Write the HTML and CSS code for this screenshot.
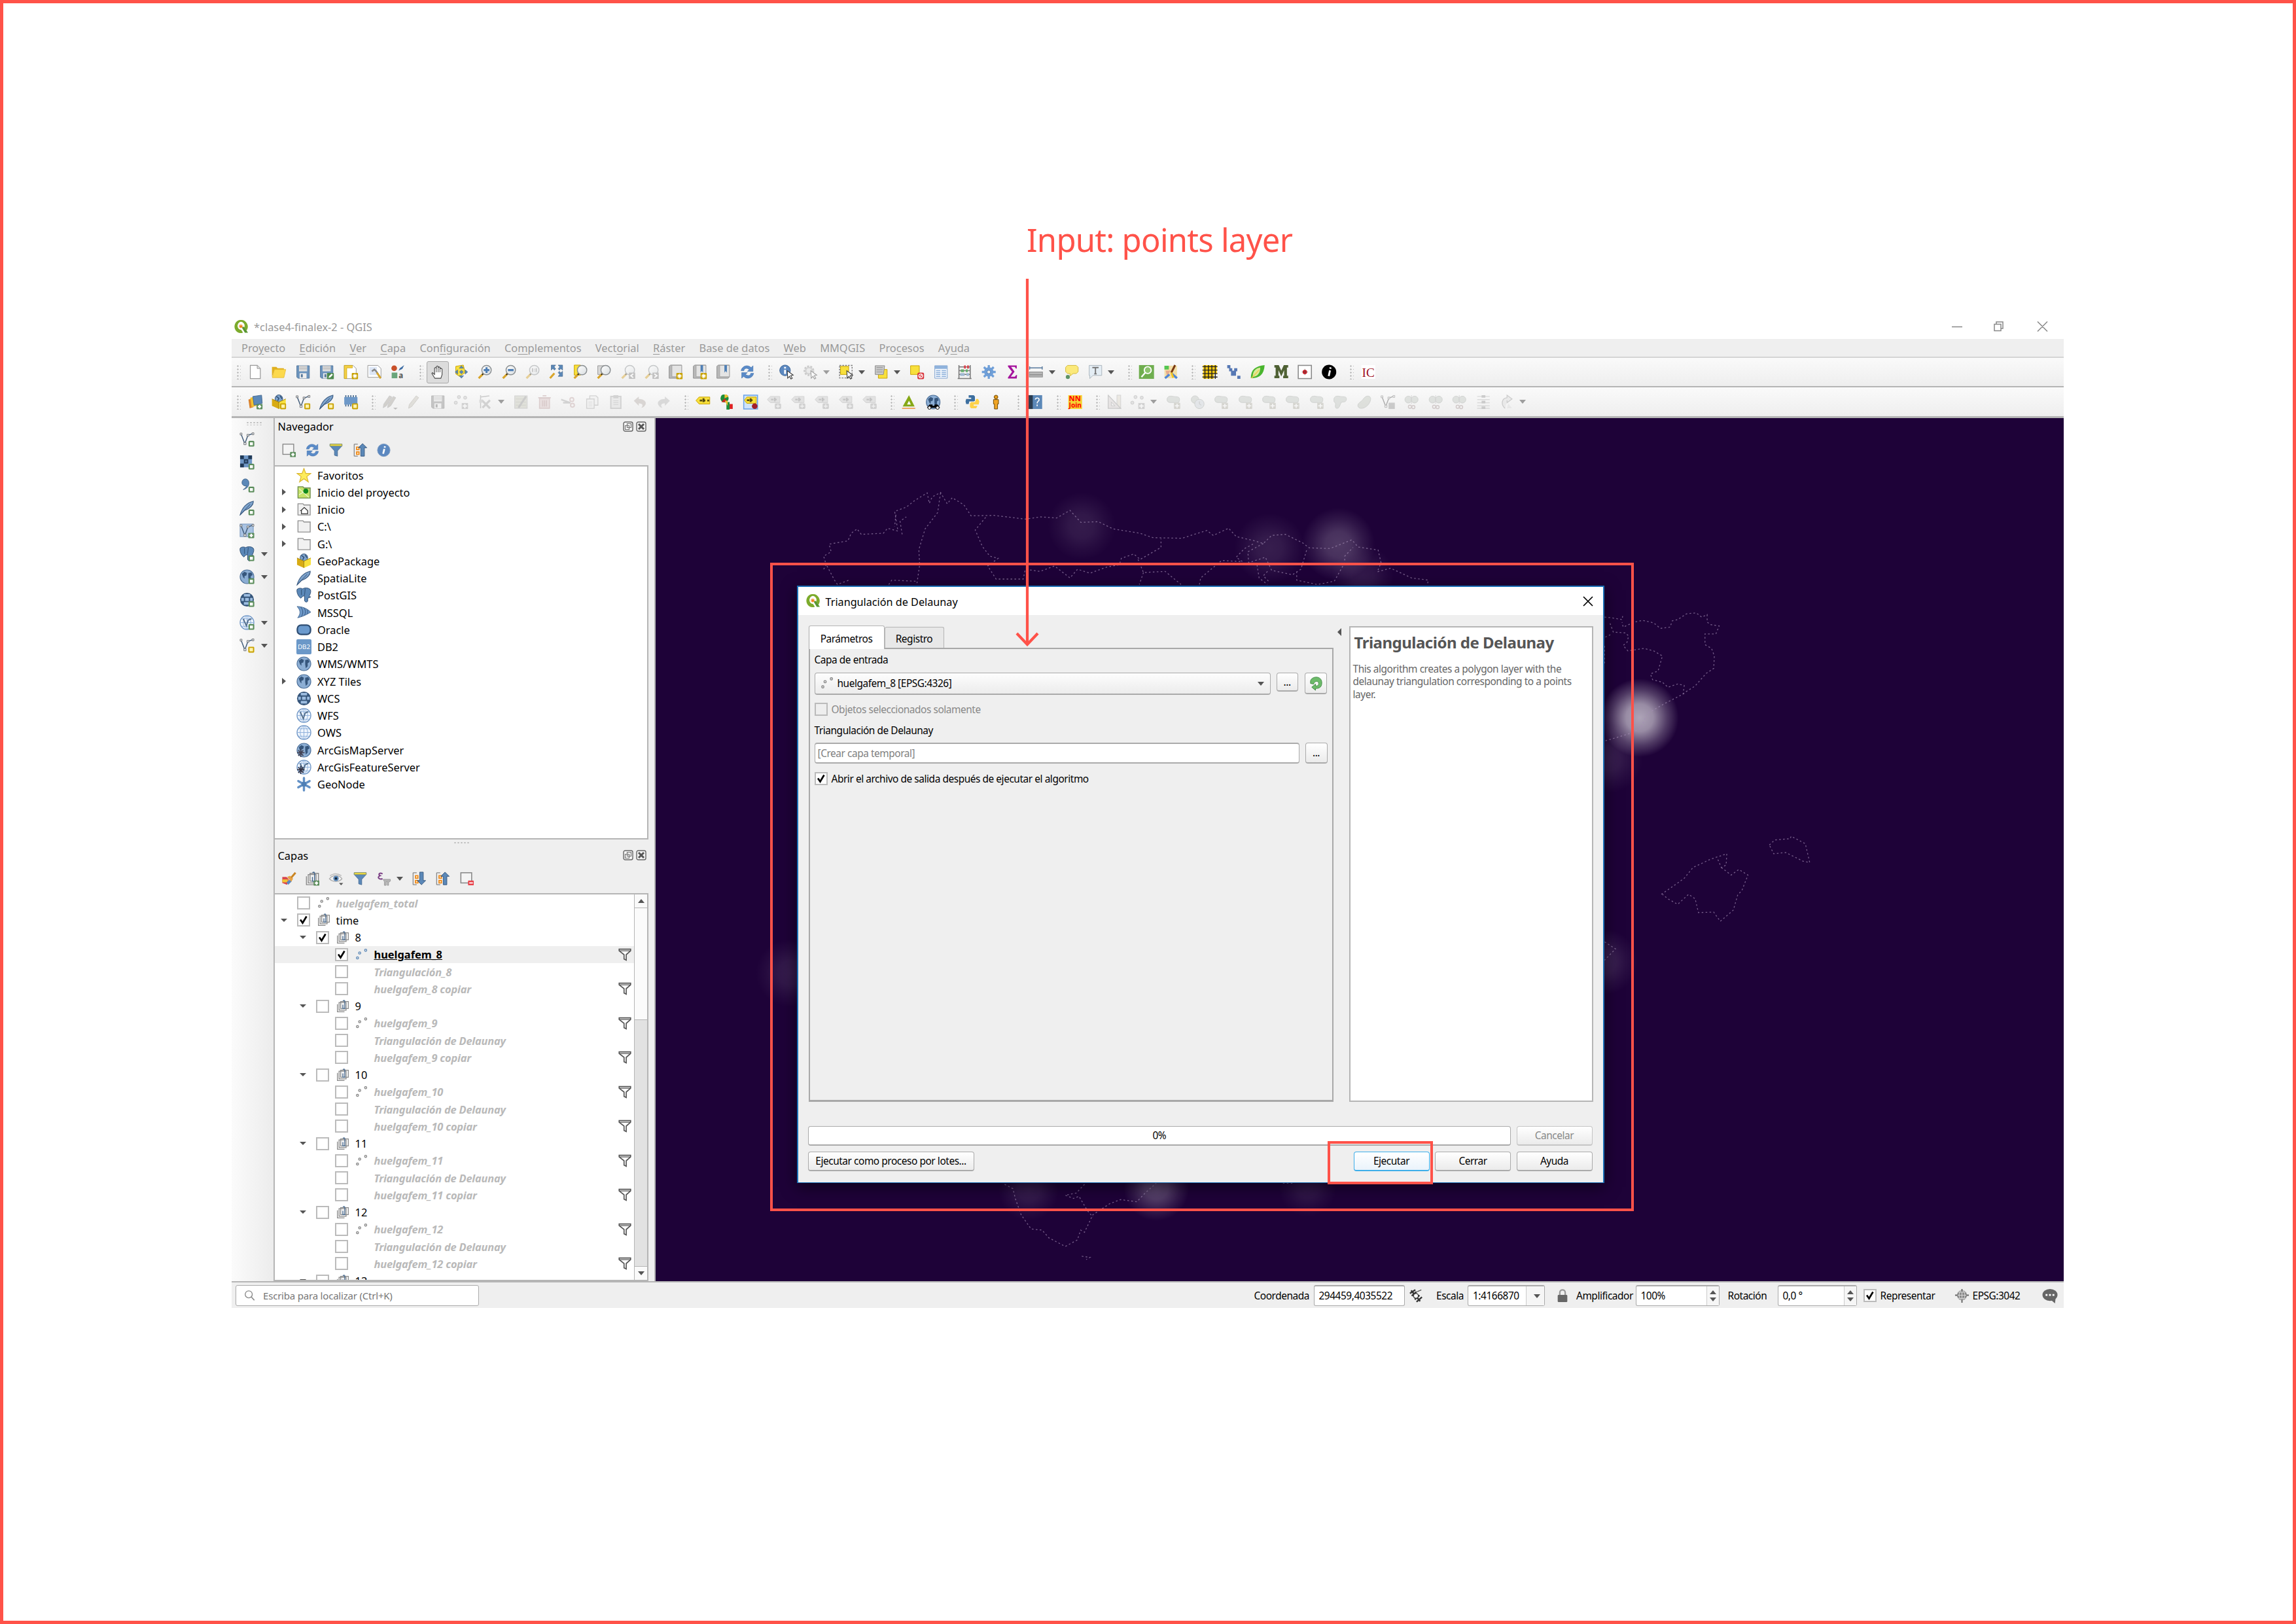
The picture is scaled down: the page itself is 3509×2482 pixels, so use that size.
FILE: index.html
```html
<!DOCTYPE html>
<html lang="es">
<head>
<meta charset="utf-8">
<title>QGIS</title>
<link rel="stylesheet" href="styles.css">
</head>
<body>
<svg class="defs" width="0" height="0">
<defs>
<linearGradient id="glass" x1="0" y1="0" x2="1" y2="1"><stop offset="0" stop-color="#fff"/><stop offset="1" stop-color="#d8dde0"/></linearGradient>
<radialGradient id="glow"><stop offset="0" stop-color="#fff"/><stop offset=".35" stop-color="#fff" stop-opacity=".85"/><stop offset=".7" stop-color="#fff" stop-opacity=".35"/><stop offset="1" stop-color="#fff" stop-opacity="0"/></radialGradient>
</defs>
<symbol id="logo" viewBox="0 0 24 24"><path d="M11 1a9.5 10.500 0 1 0 4 20l-3-4.200a5.600 6.400 0 1 1 4.800-3.200l4 4.500A10.500 11 0 0 0 11 1z" fill="#7cab2c"/><path d="M12.500 12h4l6.500 9.500h-5z" fill="#589632"/><circle cx="11.500" cy="11" r="3" fill="#f6b26b"/><circle cx="11.800" cy="11.500" r="1.700" fill="#ee7913"/></symbol>
<symbol id="b-plus" viewBox="0 0 24 24"><rect x="14" y="15" width="9.500" height="8.500" rx="1" fill="#5a8c5a"/><path d="M18.800 16.500v5.500M16 19.200h5.500" stroke="#fff" stroke-width="2.400"/></symbol>
<symbol id="b-new" viewBox="0 0 24 24"><rect x="13.500" y="13.500" width="10" height="10" rx="1" fill="#c8a100"/><path d="M18.500 14.800v7.400M14.800 18.500h7.400M16 16l5 5M21 16l-5 5" stroke="#fff" stroke-width="1.300"/></symbol>
<symbol id="b-sq" viewBox="0 0 24 24"><rect x="15" y="15" width="7.500" height="7.500" rx=".5" fill="#fff3b0" stroke="#c8a100" stroke-width="2"/></symbol>
<symbol id="b-gsq" viewBox="0 0 24 24"><rect x="15.500" y="15.500" width="7" height="7" rx=".5" fill="#fff" stroke="#5a8c5a" stroke-width="2.200"/></symbol>
<symbol id="new" viewBox="0 0 24 24"><path d="M4 1.500h11l5 5v16H4z" fill="#fff" stroke="#9a9a9a" stroke-width="1.300"/><path d="M15 1.500v5h5" fill="#ddd" stroke="#9a9a9a"/></symbol>
<symbol id="open" viewBox="0 0 24 24"><path d="M1 20V4h7l2 2h10v3H5z" fill="#e0b020"/><path d="M5 8h18l-3 13H1.500z" fill="#fcd94d" stroke="#e3b92e" stroke-width=".8"/></symbol>
<symbol id="save" viewBox="0 0 24 24"><path d="M2 2h20v20H4l-2-2z" fill="#6b93bd" stroke="#56789c"/><rect x="5.500" y="2" width="13" height="9" fill="#ddd"/><path d="M6 4h12M6 7h12" stroke="#aaa"/><rect x="6.500" y="14" width="11" height="8" fill="#eee"/><rect x="8.500" y="15.500" width="3" height="5" fill="#56789c"/></symbol>
<symbol id="saveas" viewBox="0 0 24 24"><use href="#save"/><rect x="12.500" y="13.500" width="11" height="10" rx="1" fill="#4e8a4e"/><path d="M15 21.500l1-3 4-4 2 2-4 4z" fill="#fff"/></symbol>
<symbol id="layout" viewBox="0 0 24 24"><path d="M1.500 1.500h14l5 5v16h-19z" fill="#fff" stroke="#999"/><path d="M1.500 1.500h13v4h-9v17h-4z" fill="#f3cf45" stroke="#c8a100" stroke-width=".7"/><use href="#b-new"/></symbol>
<symbol id="layoutm" viewBox="0 0 24 24"><path d="M1.500 1.500h16l5 5v14h-21z" fill="#fff" stroke="#999"/><path d="M4 4h12v13H4z" fill="#dde6f6"/><path d="M8 11l4-3 3 3 7 11" stroke="#888" stroke-width="2.600" fill="none"/><path d="M16 13l6 9" stroke="#d8a62c" stroke-width="3"/></symbol>
<symbol id="style" viewBox="0 0 24 24"><circle cx="6" cy="6" r="4.500" fill="#c8502a"/><path d="M13 10l2-4 7-5-3 6z" fill="#3f6ea5"/><rect x="2" y="13" width="9" height="9" fill="#6aa57a"/><text x="13" y="22" class="t-a">a</text></symbol>
<symbol id="hand" viewBox="0 0 24 24"><path d="M7 22l-5-8 1-1.500 3.500 3V5l1.500-1 1.500 1V2.500L11 1.500l1.500 1V4L14 3l1.500 1v2l1.500-.8 2 1.500V16l-2 6z" fill="#fff" stroke="#444" stroke-width="1.200"/><path d="M9.500 5v7M12.500 4v8M15.500 6v6" stroke="#444"/></symbol>
<symbol id="pan" viewBox="0 0 24 24"><path d="M3 3l12-2 3 12-9 6-6-4z" fill="#f8e03c" stroke="#c8a100"/><path d="M12 2l3.500 4h-7zM12 22l3.500-4h-7zM2 12l4-3.500v7zM22 12l-4-3.500v7zM9 12l3-3 3 3-3 3z" fill="#5b88b8" stroke="#3f638a" stroke-width=".6"/></symbol>
<symbol id="lens" viewBox="0 0 24 24"><path d="M9.500 14.500L2 22" stroke="#d9a52a" stroke-width="3.400"/><path d="M10 14l-2.500 2.500" stroke="#222" stroke-width="2"/><circle cx="14.500" cy="9" r="7.500" fill="url(#glass)" stroke="#8a8f92" stroke-width="1.500"/></symbol>
<symbol id="zin" viewBox="0 0 24 24"><use href="#lens"/><path d="M14.500 4.500v9M10 9h9" stroke="#4f7fb5" stroke-width="3.200"/></symbol>
<symbol id="zout" viewBox="0 0 24 24"><use href="#lens"/><path d="M10 9h9" stroke="#4f7fb5" stroke-width="3.200"/></symbol>
<symbol id="z11" viewBox="0 0 24 24"><use href="#lens"/><path d="M11.500 6v6M17.500 6v6M14.500 7v1M14.500 10v1" stroke="#777" stroke-width="1.500"/></symbol>
<symbol id="zfull" viewBox="0 0 24 24"><path d="M4 1h7L8.500 4 11 7 9 9 6.500 6.500 4 9zM22 1v8l-3-2.500L17 9l-2-2 2.500-3L15 1zM22 19h-7l2.500-3L15 13l2-2 2 2.500 3-2.500z" fill="#5b88b8" stroke="#3f638a" stroke-width=".7"/><path d="M9 14l-7 8" stroke="#d9a52a" stroke-width="3.200"/></symbol>
<symbol id="zsel" viewBox="0 0 24 24"><path d="M2 1h10v16H2z" fill="#f8e03c" stroke="#c8a100"/><use href="#lens"/></symbol>
<symbol id="zlay" viewBox="0 0 24 24"><path d="M2 2h10v14H2z" fill="#d8d8d8" stroke="#999"/><use href="#lens"/></symbol>
<symbol id="zlast" viewBox="0 0 24 24"><use href="#lens"/><rect x="13" y="13" width="10" height="10" fill="#888"/><path d="M20 15l-4 3 4 3" stroke="#fff" stroke-width="2" fill="none"/></symbol>
<symbol id="znext" viewBox="0 0 24 24"><use href="#lens"/><rect x="13" y="13" width="10" height="10" fill="#888"/><path d="M16 15l4 3-4 3" stroke="#fff" stroke-width="2" fill="none"/></symbol>
<symbol id="book" viewBox="0 0 24 24"><path d="M2 3l2-2h18v19l-2 2H2z" fill="#b8b8b8" stroke="#8f8f8f"/><path d="M6.500 1.500H22v18H6.500z" fill="#e4e4e4" stroke="#9c9c9c" stroke-width=".8"/></symbol>
<symbol id="bm1" viewBox="0 0 24 24"><use href="#book"/><use href="#b-new"/></symbol>
<symbol id="bm2" viewBox="0 0 24 24"><use href="#book"/><path d="M13.500 1h4v12l-2-2.500-2 2.500z" fill="#4f7fb5"/><use href="#b-new"/></symbol>
<symbol id="bm3" viewBox="0 0 24 24"><use href="#book"/><path d="M14 1h4v12l-2-2.500-2 2.500z" fill="#4f7fb5"/></symbol>
<symbol id="refresh" viewBox="0 0 24 24"><path d="M2 10C3 3 12-1 18 5l3-3v9h-9l3-3C11 5 7 6 6.500 10zM22 14c-1 7-10 11-16 5l-3 3v-9h9l-3 3c4 3 8 2 8.500-2z" fill="#5a8bc8" stroke="#3d6ca8" stroke-width=".6"/></symbol>
<symbol id="cursor" viewBox="0 0 24 24"><path d="M13 10l9.500 7-4 .8 2.500 4.200-2 1.200-2.500-4.200-2.800 3z" fill="#fff" stroke="#333" stroke-width="1.100"/></symbol>
<symbol id="ident" viewBox="0 0 24 24"><circle cx="9.500" cy="9.500" r="8.500" fill="#5b88c0" stroke="#3d6596"/><path d="M9.500 8.500V15M9.500 4v2.500" stroke="#fff" stroke-width="3"/><use href="#cursor"/></symbol>
<symbol id="action" viewBox="0 0 24 24"><circle cx="10" cy="10" r="7" fill="#ddd" stroke="#999" stroke-width="3" stroke-dasharray="3 2"/><circle cx="10" cy="10" r="5" fill="none" stroke="#aaa" stroke-width="2"/><use href="#cursor"/></symbol>
<symbol id="select" viewBox="0 0 24 24"><path d="M1.500 1.500h20v20h-20z" fill="none" stroke="#777" stroke-dasharray="2.500 2" stroke-width="1.500"/><path d="M3 3h13v13H3z" fill="#f8e03c" stroke="#c8a100"/><use href="#cursor"/></symbol>
<symbol id="selval" viewBox="0 0 24 24"><path d="M7 8h14v14H7z" fill="#f8e03c" stroke="#c8a100"/><path d="M2 2h15l-2 14H2z" fill="#ccc" stroke="#888"/><path d="M4 5h10M4 8.500h10M4 12h10" stroke="#8b8b8b"/></symbol>
<symbol id="desel" viewBox="0 0 24 24"><path d="M2 2h14v14H2z" fill="#f8e03c" stroke="#c8a100"/><rect x="13" y="13" width="10.500" height="10.500" rx="2" fill="#d9363e"/><circle cx="18.200" cy="18.200" r="3" fill="none" stroke="#fff" stroke-width="1.300"/><path d="M16 20.500l4.500-4.500" stroke="#fff" stroke-width="1.300"/></symbol>
<symbol id="table" viewBox="0 0 24 24"><path d="M2 2h20v20H2z" fill="#f2f6fc" stroke="#7fa3cf"/><path d="M2 2h20v5H2z" fill="#8fb2dc"/><path d="M4 10h7M13 10h7M4 13h7M13 13h7M4 16h7M13 16h7M4 19h7M13 19h7" stroke="#8db0da" stroke-width="1.600"/></symbol>
<symbol id="abacus" viewBox="0 0 24 24"><path d="M3 1v21M21 1v21M1 22.500h22M3 4h18M3 10h18M3 16h18" stroke="#777" stroke-width="1.600"/><path d="M11 4h3M16 4h3" stroke="#d9464e" stroke-width="5"/><path d="M6 10h5M14 10h3" stroke="#65ae6e" stroke-width="4.500"/><path d="M5 16h7M15 16h4" stroke="#9fb8d2" stroke-width="4.500"/></symbol>
<symbol id="gear" viewBox="0 0 24 24"><path d="M12 1v22M1 12h22M4.200 4.200l15.600 15.600M19.800 4.200L4.200 19.800" stroke="#6f9fd8" stroke-width="3.400"/><circle cx="12" cy="12" r="7.500" fill="#6f9fd8"/><circle cx="12" cy="12" r="2.800" fill="#eee" stroke="#4d7cb4"/></symbol>
<symbol id="sigma" viewBox="0 0 24 24"><path d="M5 1.500h14v5h-1.500L16 4H10l5.500 7.500L9.500 19.500H16l2-2.500h1.500l-.5 5.500H5V20.500l6.500-8.700L5 3.500z" fill="#a5139c"/></symbol>
<symbol id="measure" viewBox="0 0 24 24"><path d="M2 3v5M22 3v5M2 5.500h20" stroke="#56789c" stroke-width="1.500"/><rect x="1.500" y="12" width="21" height="8" fill="#b8b8b8" stroke="#888"/><path d="M2 16.500h20" stroke="#777"/></symbol>
<symbol id="tip" viewBox="0 0 24 24"><path d="M5 1.500h14l3 3v7l-3 3h-5l-5 4v-4H5l-3-3v-7z" fill="#fbe97a" stroke="#d2b93f"/><circle cx="5.500" cy="20" r="3.200" fill="#5e9364"/></symbol>
<symbol id="text" viewBox="0 0 24 24"><path d="M2 1.500h20v16H8l-5 5v-5H2z" fill="#e4edf4" stroke="#aab4bc"/><path d="M7 5h10M12 5v10M10 15h4" stroke="#777" stroke-width="2"/></symbol>
<symbol id="osm" viewBox="0 0 24 24"><rect y="1" width="24" height="22" fill="#6fae4f"/><circle cx="14" cy="9" r="5.500" fill="#8cc46e" stroke="#fff" stroke-width="2"/><path d="M10 13l-6 7" stroke="#fff" stroke-width="2.400"/></symbol>
<symbol id="crayon" viewBox="0 0 24 24"><rect x="2" y="2" width="20" height="20" fill="#f3dfa8"/><path d="M2 2h7v6H2z" fill="#53c653"/><path d="M4 10h8l-6 8z" fill="#e8a98a"/><path d="M14 15l8 7M3 22l7-6" stroke="#4f86d8" stroke-width="3.500"/><path d="M19 1L13 13" stroke="#7a3a12" stroke-width="3.200"/><path d="M13 13l3 8" stroke="#f2c422" stroke-width="3"/></symbol>
<symbol id="grid" viewBox="0 0 24 24"><path d="M1 1h22v14h-5v8H1z" fill="#f6c90e"/><path d="M4 1v22M9.500 1v22M15 1v22M20.500 1v22M0 3.500h24M0 9h24M0 14.500h24M0 20h24" stroke="#222" stroke-width="1.500"/></symbol>
<symbol id="yy" viewBox="0 0 24 24"><path d="M2 1h5v5H2zM5 6h5v5H5zM13 6h5v5h-5zM8 10h8v8H8zM18 18h5v5h-5z" fill="#5678b4"/></symbol>
<symbol id="leaf" viewBox="0 0 24 24"><path d="M1 22C1 8 8 3 23 1c-1 15-8 21-22 21z" fill="#49b52e"/><path d="M4 20C4 10 9 6 16 5c0 9-4 14-12 15z" fill="#d8ea9a"/><path d="M2 22L14 9" stroke="#f3c94a" stroke-width="1.500"/></symbol>
<symbol id="mm" viewBox="0 0 24 24"><path d="M1 1h7l4 9 4-9h7v4h-2v13h2v4h-8v-4h1.500V9L12 19 7.500 9v9H9v4H1v-4h2V5H1z" fill="#4f6134"/></symbol>
<symbol id="dot" viewBox="0 0 24 24"><rect x="1.500" y="1.500" width="21" height="21" fill="#fff" stroke="#888" stroke-width="1.600"/><circle cx="12" cy="12" r="3.500" fill="#d2151f"/><path d="M7 12h10M12 7v10" stroke="#555" stroke-width=".6"/></symbol>
<symbol id="info" viewBox="0 0 24 24"><ellipse cx="12" cy="12" rx="11.500" ry="11.500" fill="#000"/><path d="M13.500 9.500l-2 9M14.500 4.500l-.6 2.500" stroke="#fff" stroke-width="3"/></symbol>
<symbol id="ic" viewBox="0 0 24 24"><rect x="1" y="1" width="22" height="22" fill="#fff"/><text x="2" y="19.500" class="t-ic" textLength="20" lengthAdjust="spacingAndGlyphs">IC</text></symbol>
<symbol id="dsm" viewBox="0 0 24 24"><path d="M1 8l8-3v15l-6 2z" fill="#d9822b"/><path d="M4 5l10-2v15l-8 2z" fill="#f1c232"/><path d="M8 3l14-2 1 13-13 3z" fill="#5b88b8" stroke="#45688f"/><use href="#b-plus"/></symbol>
<symbol id="box" viewBox="0 0 24 24"><circle cx="12" cy="6.500" r="6" fill="#7ea3cc" stroke="#2f4e73"/><path d="M8 3l4 3-2 4M14 2l3 5" stroke="#2f4e73" stroke-width="1.500" fill="none"/><path d="M1 7l11 5v11L1 18z" fill="#d8ab14"/><path d="M23 7l-11 5v11l11-5z" fill="#f8e03c"/><path d="M1 7l11 5 11-5M12 12v11" stroke="#8a6d00" fill="none" stroke-width=".8"/></symbol>
<symbol id="gpkg" viewBox="0 0 24 24"><use href="#box"/><use href="#b-sq"/></symbol>
<symbol id="vee" viewBox="0 0 24 24"><path d="M2.500 3.500L8.500 19l5-13.500L22 2.500" fill="none" stroke="#3f5a78" stroke-width="1.500"/><path d="M1 2h3v3H1zM7 17h3.500v3.500H7zM12 4h3v3h-3zM20 1.500h3v3h-3z" fill="#dfe6ee" stroke="#777" stroke-width="1"/></symbol>
<symbol id="newv" viewBox="0 0 24 24"><use href="#vee"/><use href="#b-sq"/></symbol>
<symbol id="addv" viewBox="0 0 24 24"><use href="#vee"/><use href="#b-gsq"/></symbol>
<symbol id="quill" viewBox="0 0 24 24"><path d="M1 23C4 12 10 4 22 1c1 6-6 12-14 15z" fill="#7ea3cc" stroke="#3f5f85" stroke-width="1.200"/><path d="M1 23L17 6" stroke="#2f4e73"/></symbol>
<symbol id="newq" viewBox="0 0 24 24"><use href="#quill"/><use href="#b-sq"/></symbol>
<symbol id="addq" viewBox="0 0 24 24"><use href="#quill"/><use href="#b-gsq"/></symbol>
<symbol id="chip" viewBox="0 0 24 24"><path d="M4 1v18M8 1v18M12 1v18M16 1v18M20 1v18" stroke="#3f638a" stroke-width="1.700"/><rect x="1.500" y="4" width="21" height="12" fill="#6d98c8"/><use href="#b-sq"/></symbol>
<symbol id="pencil" viewBox="0 0 24 24"><path d="M4 22l1-6L16 2l4 3L9 19z" fill="#c9c6bc" stroke="#a5a29a"/></symbol>
<symbol id="pencils" viewBox="0 0 24 24"><path d="M1 21l1-6L11 2l4 2L6 18zM8 21l1-6L17 3l4 2-8 13z" fill="#aaa69e" stroke="#999"/><path d="M17 21h7l-3.500 3z" fill="#777"/></symbol>
<symbol id="pts" viewBox="0 0 24 24"><circle cx="8" cy="4" r="2.500" fill="#ccc" stroke="#999"/><circle cx="18" cy="5" r="2.500" fill="#ccc" stroke="#999"/><circle cx="3" cy="13" r="2.500" fill="#ccc" stroke="#999"/><rect x="12.500" y="13.500" width="10" height="9.500" fill="#aaa"/><path d="M17.500 15v7M14 18.200h7" stroke="#fff" stroke-width="2"/></symbol>
<symbol id="vertex" viewBox="0 0 24 24"><path d="M5 1v21M5 4l14-2" stroke="#999" stroke-width="1.500"/><path d="M7 9l13 13M20 9L8 21" stroke="#aaa" stroke-width="3.500"/><rect x="3" y="8" width="5" height="5" fill="#bbb"/></symbol>
<symbol id="modify" viewBox="0 0 24 24"><rect x="2" y="2" width="20" height="20" fill="#c9cabd" stroke="#aaa"/><path d="M4 7h16M4 12h16M4 17h16" stroke="#aeb0a0"/><path d="M8 21L20 3" stroke="#999" stroke-width="3"/></symbol>
<symbol id="trash" viewBox="0 0 24 24"><path d="M4 6h16v16H4z" fill="#dcc6c6" stroke="#bd9f9f" stroke-width="1.500"/><path d="M2 5h20M9 2h6M9 9v10M12 9v10M15 9v10" stroke="#bd9f9f" stroke-width="1.800"/></symbol>
<symbol id="cut" viewBox="0 0 24 24"><path d="M1 8l14 5M4 13h12" stroke="#aaa" stroke-width="2.500"/><circle cx="18" cy="8" r="3" fill="none" stroke="#c5aaaa" stroke-width="2"/><circle cx="19" cy="17" r="3" fill="none" stroke="#c5aaaa" stroke-width="2"/></symbol>
<symbol id="copy" viewBox="0 0 24 24"><path d="M8 2h10l3 3v12H8z" fill="#eee" stroke="#aaa" stroke-width="1.400"/><path d="M3 7h12v15H3z" fill="#eee" stroke="#aaa" stroke-width="1.400"/><path d="M6 12h6M6 15h6M6 18h6" stroke="#bbb"/></symbol>
<symbol id="paste" viewBox="0 0 24 24"><rect x="4" y="3" width="16" height="19" fill="#ddd" stroke="#aaa" stroke-width="2"/><rect x="8" y="1" width="8" height="5" fill="#aaa"/><path d="M8 10h8M8 13h8M8 16h8" stroke="#aaa"/></symbol>
<symbol id="undo" viewBox="0 0 24 24"><path d="M2 10l8-7v4c9 0 12 5 11 8s-4 6-7 6c3-3 3-7-4-7v4z" fill="#b9b1ad"/></symbol>
<symbol id="redo" viewBox="0 0 24 24"><path d="M22 10l-8-7v4c-9 0-12 5-11 8s4 6 7 6c-3-3-3-7 4-7v4z" fill="#b9b9b9"/></symbol>
<symbol id="label" viewBox="0 0 24 24"><path d="M6 4h17v11H6l-5-5.500z" fill="#f8e03c" stroke="#c8a100"/><path d="M7 9.500h4M13 6v6M13 9.500h3M19 9.500h3" stroke="#554b10" stroke-width="3"/></symbol>
<symbol id="diag" viewBox="0 0 24 24"><circle cx="8" cy="6" r="6.500" fill="#1d8e3a"/><path d="M8 6V-.5a6.500 6.500 0 0 1 6 4z" fill="#f1c232"/><path d="M8 6l5 6H3z" fill="#c22"/><path d="M11 12h5v12h-5z" fill="#1d8e3a"/><path d="M16 15h5v8h-5z" fill="#d22"/><path d="M8 10h5v8z" fill="#f1c232"/></symbol>
<symbol id="labsel" viewBox="0 0 24 24"><rect x="1" y="1" width="22" height="22" fill="#cfe3fa" stroke="#6aa3e8" stroke-width="1.600"/><path d="M6 4h15v10H6L2 9z" fill="#f8e03c" stroke="#c8a100"/><path d="M6 9h4M12 6v6M12 9h3" stroke="#554b10" stroke-width="3"/><circle cx="18.500" cy="18.500" r="4.500" fill="#a11d2a"/></symbol>
<symbol id="labx" viewBox="0 0 24 24"><path d="M6 3h15v10H6L1 8z" fill="#ccc" stroke="#aaa"/><path d="M7 8h4M13 5v6M13 8h3" stroke="#888" stroke-width="2.500"/><rect x="13" y="14" width="10" height="9" rx="2" fill="#aaa"/><path d="M18 15.500v6M15 18.500h6" stroke="#eee" stroke-width="1.500"/></symbol>
<symbol id="tri" viewBox="0 0 24 24"><path d="M12 1l9 18H2z" fill="#86a816"/><path d="M12 10l3 6H9z" fill="#fff"/><path d="M1 22h21" stroke="#ee9d55" stroke-width="2"/></symbol>
<symbol id="globe" viewBox="0 0 24 24"><circle cx="12" cy="12" r="11" fill="#8caed4" stroke="#4d7099" stroke-width="1.200"/><path d="M4 7l4-3 4 2-1 4-3 1v4l-2-2-2-5zM14 6l5-1 2 4-3 2v5l-3 3-1-6z" fill="#36567c"/></symbol>
<symbol id="bino" viewBox="0 0 24 24"><use href="#globe"/><path d="M6 16h5v2h3v-2h5l4 5H2z" fill="#000"/><circle cx="6" cy="21" r="2.500" fill="#fff" stroke="#000"/><circle cx="19" cy="21" r="2.500" fill="#fff" stroke="#000"/></symbol>
<symbol id="py" viewBox="0 0 24 24"><path d="M6 1h8l2 2v7l-2 1H7l-1 4H2l-1-4 1-4h8V5H6z" fill="#3d6f9f"/><path d="M18 22h-8l-2-2v-6l2-2h6l2-5h3l2 4-1 5h-8v2h6z" fill="#fdd24a"/></symbol>
<symbol id="person" viewBox="0 0 24 24"><circle cx="12" cy="4" r="3" fill="#e39a1c" stroke="#6b4604"/><path d="M8 8h8v7h-1.500v8h-5v-8H8z" fill="#f0a526" stroke="#6b4604"/></symbol>
<symbol id="help" viewBox="0 0 24 24"><rect x="1" y="1" width="22" height="22" fill="#5b88b8"/><rect x="1" y="1" width="7" height="22" fill="#2a3c50"/><path d="M12 8c1-4 7-3 6 1-1 2-3 2-3 5M15 16v2.500" fill="none" stroke="#fff" stroke-width="1.700"/></symbol>
<symbol id="nn" viewBox="0 0 24 24"><rect x="1" y="1" width="22" height="22" fill="#f5d232"/><text x="2" y="10.500" class="t-nn" textLength="19" lengthAdjust="spacingAndGlyphs">NN</text><text x="2" y="20.500" class="t-nn" textLength="20" lengthAdjust="spacingAndGlyphs">Join</text></symbol>
<symbol id="ruler" viewBox="0 0 24 24"><rect x="16" y="1" width="6" height="21" fill="#ded9cc" stroke="#aaa"/><path d="M2 1v21h20z" fill="#d9d2d2" stroke="#999" stroke-width="1.300"/><path d="M7 12v6h6z" fill="#eee" stroke="#999"/></symbol>
<symbol id="blob" viewBox="0 0 24 24"><path d="M2 8c0-6 6-6 10-5s10-1 10 5-5 6-8 5-12 2-12-5z" fill="#c4c9c4" stroke="#a3a8a3"/><rect x="13" y="13" width="10" height="10" rx="1" fill="#b5b3a8"/><path d="M18 14.500v7M14.500 18h7" stroke="#fff" stroke-width="1.600"/></symbol>
<symbol id="blob2" viewBox="0 0 24 24"><circle cx="8" cy="8" r="6" fill="#c4c9c4" stroke="#a3a8a3"/><ellipse cx="15" cy="15" rx="7.500" ry="7.500" fill="#d0d6dc" stroke="#a3a8a3"/><path d="M15 11v4l3 2" stroke="#999" fill="none"/></symbol>
<symbol id="blob3" viewBox="0 0 24 24"><path d="M2 8c0-6 6-6 10-5s10-1 10 4-4 5-7 5-3 10-8 10-1-8-3-9-2-2-2-5z" fill="#c4c9c4" stroke="#a3a8a3"/></symbol>
<symbol id="blob4" viewBox="0 0 24 24"><path d="M11 6c5-6 12-4 11 2-1 7-8 14-15 14-6 0-7-6-3-9s5-4 7-7z" fill="#c4c9c0" stroke="#a3a8a3"/></symbol>
<symbol id="split" viewBox="0 0 24 24"><circle cx="7" cy="8" r="5.500" fill="#c4c9c4" stroke="#a3a8a3"/><circle cx="17" cy="8" r="5.500" fill="#c4c9c4" stroke="#a3a8a3"/><path d="M12 1v14" stroke="#aaa"/><circle cx="9.500" cy="19.500" r="2.500" fill="none" stroke="#a99" stroke-width="1.500"/><circle cx="15" cy="20" r="2.500" fill="none" stroke="#a99" stroke-width="1.500"/></symbol>
<symbol id="vdis" viewBox="0 0 24 24"><use href="#vee"/><rect x="13" y="13" width="10" height="10" fill="#999"/></symbol>
<symbol id="lines" viewBox="0 0 24 24"><path d="M2 3h20M2 8h20M2 13h20M2 18h20M2 22h20" stroke="#bbb" stroke-width="1.500"/><path d="M9 3h6M9 12h6M9 21h6" stroke="#999" stroke-width="4"/></symbol>
<symbol id="rot" viewBox="0 0 24 24"><path d="M9 22C2 16 3 6 12 5V1l8 6-8 6V9" fill="#ddd" stroke="#999" stroke-width="1.300"/><path d="M14 14l6 8h-8z" fill="#ddd"/></symbol>
<symbol id="raster" viewBox="0 0 24 24"><rect x="1" y="1" width="19" height="19" fill="#6f97c6"/><path d="M1 1h6v6H1zM14 1h6v6h-6zM7 7h7v7H7zM1 14h6v6H1z" fill="#1f3956"/><path d="M9 9h3v3H9z" fill="#4e75a0"/><use href="#b-gsq"/></symbol>
<symbol id="comma" viewBox="0 0 24 24"><path d="M9 2c4 0 6 3 6 7 0 5-4 9-9 10 3-2 5-4 5-6-4 1-7-2-7-5s2-6 5-6z" fill="#5b88b8" stroke="#3f638a"/><use href="#b-gsq"/></symbol>
<symbol id="virt" viewBox="0 0 24 24"><rect x="1" y="1" width="21" height="20" fill="#a9c3e2" stroke="#6d90ba"/><use href="#vee"/><use href="#b-plus"/></symbol>
<symbol id="eleph" viewBox="0 0 24 24"><path d="M1 3c3-3 7-2 9-1 3-2 9-2 12 1 2 3 0 8-2 11l3 1-5 2v5c-2 2-4 1-5-1V13l-3 1-3 3C3 14 0 8 1 3z" fill="#5b88b8" stroke="#2f4e73"/><path d="M8 3v9M14 2l-1 10" stroke="#2f4e73"/></symbol>
<symbol id="addel" viewBox="0 0 24 24"><use href="#eleph"/><use href="#b-gsq"/></symbol>
<symbol id="addgl" viewBox="0 0 24 24"><use href="#globe"/><use href="#b-gsq"/></symbol>
<symbol id="wcs" viewBox="0 0 24 24"><circle cx="12" cy="12" r="11" fill="#35557a"/><path d="M7 3h10v4H7zM3 9h4v5H3zM9 9h6v5H9zM17 9h4v5h-4zM7 16h10v4H7z" fill="#9dbde0"/></symbol>
<symbol id="addwcs" viewBox="0 0 24 24"><use href="#wcs"/><use href="#b-gsq"/></symbol>
<symbol id="ows" viewBox="0 0 24 24"><circle cx="12" cy="12" r="11" fill="#eef5fd" stroke="#6d94c4" stroke-width="1.300"/><path d="M1 12h22M3 6h18M3 18h18M12 1v22M12 1C4 7 4 17 12 23M12 1c8 6 8 16 0 22" fill="none" stroke="#8db0da"/></symbol>
<symbol id="wfs" viewBox="0 0 24 24"><use href="#ows"/><path d="M6 6l5 11 3-9 5-2" fill="none" stroke="#55708e" stroke-width="2"/></symbol>
<symbol id="addwfs" viewBox="0 0 24 24"><use href="#wfs"/><use href="#b-gsq"/></symbol>
<symbol id="addbox" viewBox="0 0 24 24"><rect x="2" y="2" width="18" height="17" fill="#f4f4f4" stroke="#888" stroke-width="1.500"/><use href="#b-plus"/></symbol>
<symbol id="funnel" viewBox="0 0 24 24"><path d="M2 2h20v3l-7.500 8v9l-5-1.500V13L2 5z" fill="#5b88b8" stroke="#456b95"/><path d="M2 2h20v3H2z" fill="#f8e03c" stroke="#8f9a60"/></symbol>
<symbol id="collapse" viewBox="0 0 24 24"><path d="M2 2v20M2 2h6M2 22h6" stroke="#888" stroke-width="1.400" fill="none"/><path d="M6 7h4v4H6zM6 15h4v4H6z" fill="#fff" stroke="#f08c1a" stroke-width="2"/><path d="M16 1l7 7h-4v14h-6V8H9z" fill="#5b88b8" stroke="#33557d"/></symbol>
<symbol id="expand" viewBox="0 0 24 24"><path d="M2 2v20M2 2h6M2 22h6" stroke="#888" stroke-width="1.400" fill="none"/><path d="M6 7h4v4H6zM6 15h4v4H6z" fill="#fff" stroke="#f08c1a" stroke-width="2"/><path d="M16 22l7-7h-4V1h-6v14H9z" fill="#5b88b8" stroke="#33557d"/></symbol>
<symbol id="iblue" viewBox="0 0 24 24"><circle cx="12" cy="12" r="10.500" fill="#5b88c0" stroke="#7f9dc2"/><path d="M13 10l-2 8M14 5.500l-.5 2.500" stroke="#fff" stroke-width="3"/></symbol>
<symbol id="star" viewBox="0 0 24 24"><path d="M12 1l3 8h8l-6.500 5 2.500 8.500L12 17.500 5 22.500 7.500 14 1 9h8z" fill="#fdec5c" stroke="#d9b52c" stroke-width="1.200"/></symbol>
<symbol id="folder" viewBox="0 0 24 24"><path d="M2.500 21V3h8l1.500 2h10v16z" fill="#f1f1f1" stroke="#909090" stroke-width="1.400"/></symbol>
<symbol id="fproj" viewBox="0 0 24 24"><path d="M2.500 21V3h8l1.500 2h10v16z" fill="#c6e26a" stroke="#6c8a4a" stroke-width="1.400"/><path d="M4 6l16 14M4 16l8-5" stroke="#fff"/><circle cx="15" cy="10" r="4" fill="#0f8a1d"/></symbol>
<symbol id="fhome" viewBox="0 0 24 24"><use href="#folder"/><path d="M7 14l5.500-5 5.500 5v5H8v-5z" fill="#fff" stroke="#333" stroke-width="1.300"/></symbol>
<symbol id="mssql" viewBox="0 0 24 24"><path d="M1 2c8 0 16 3 22 9-5 3-12 7-21 9 5-6 5-12-1-18z" fill="#6d98c8" stroke="#456b95"/><path d="M7 3c4 5 4 10 1 15M12 4c3 4 3 8 1 12M17 7c2 3 1 5 0 7" stroke="#33557d" fill="none"/></symbol>
<symbol id="oracle" viewBox="0 0 24 24"><rect x="1.500" y="4.500" width="21" height="15" rx="6" fill="#6b9acd" stroke="#2f4e73" stroke-width="2.400"/></symbol>
<symbol id="db2" viewBox="0 0 24 24"><rect x="0" y="0" width="24" height="24" rx="2" fill="#6b98c8"/><text x="2" y="15.500" class="t-db" textLength="20" lengthAdjust="spacingAndGlyphs">DB2</text></symbol>
<symbol id="arcm" viewBox="0 0 24 24"><use href="#globe"/><path d="M7 10v13M1 16h12M3 12l8 9M11 12l-8 9" stroke="#445" stroke-width="1.700"/></symbol>
<symbol id="arcf" viewBox="0 0 24 24"><use href="#wfs"/><path d="M7 10v13M1 16h12M3 12l8 9M11 12l-8 9" stroke="#334" stroke-width="1.700"/></symbol>
<symbol id="geonode" viewBox="0 0 24 24"><path d="M12 2v20M3 7l18 10M21 7L3 17" stroke="#6391c6" stroke-width="3.600" stroke-linecap="round"/><circle cx="12" cy="12" r="4" fill="#4f7fb5"/></symbol>
<symbol id="brush" viewBox="0 0 24 24"><path d="M1 9h7l4 4-3 9-8-3z" fill="#d9464e"/><path d="M1 13l10 0-2 5-8 0z" fill="#f1c232"/><path d="M8 18l6-5 3 3-6 6z" fill="#5b88c0"/><path d="M9 9l5-2 5 5-3 5z" fill="#e7a244"/><path d="M16 10l7-8" stroke="#c98422" stroke-width="3.200"/></symbol>
<symbol id="group" viewBox="0 0 24 24"><path d="M2 8v14h13" fill="none" stroke="#888" stroke-width="1.500"/><path d="M5 5h13v14H5z" fill="#f4f4f4" stroke="#888" stroke-width="1.500"/><path d="M8 3h14v13H8z" fill="none" stroke="#888" stroke-width="1.500"/><path d="M12 9v7h3.500V2.500c0-2-3-2-3 0" fill="none" stroke="#45688f" stroke-width="1.600"/></symbol>
<symbol id="addgrp" viewBox="0 0 24 24"><use href="#group"/><use href="#b-plus"/></symbol>
<symbol id="eye" viewBox="0 0 24 24"><path d="M1 12C6 5 17 5 22 12 17 18 6 18 1 12z" fill="#f2f2f2" stroke="#aaa" stroke-width="1.400"/><circle cx="12" cy="11.500" r="4.500" fill="#5b88b8"/><circle cx="12" cy="11.500" r="2" fill="#123"/><path d="M2 7c6-4 13-4 19 0" stroke="#bbb" fill="none" stroke-width="1.500"/><path d="M17 19h7l-3.500 4z" fill="#555"/></symbol>
<symbol id="eps" viewBox="0 0 24 24"><path d="M10 4C5 1 2 5 6 7 0 9 4 14 10 12" fill="none" stroke="#7b3f85" stroke-width="2.200"/><path d="M11 13h12v3l-3 2v5h-2v-6h-2v6h-3v-6z" fill="#b5b5b5" stroke="#999"/></symbol>
<symbol id="rem" viewBox="0 0 24 24"><rect x="2" y="2" width="18" height="17" fill="#f4f4f4" stroke="#888" stroke-width="1.700"/><rect x="14" y="15" width="9.500" height="8" rx="1" fill="#e8434b"/><path d="M16 19h6" stroke="#fff" stroke-width="2"/></symbol>
<symbol id="points" viewBox="0 0 24 24"><g fill="#e8e8e8" stroke="currentColor" stroke-width="1.500"><circle cx="19" cy="4" r="2"/><circle cx="8" cy="9" r="2"/><circle cx="4" cy="18" r="2"/></g></symbol>
<symbol id="filt" viewBox="0 0 24 24"><path d="M1.500 2h21v3l-8 7v10l-4-2V12l-9-7z" fill="#fff" stroke="currentColor" stroke-width="2"/><path d="M2 5h20" stroke="currentColor" stroke-width="1.500"/></symbol>
<symbol id="check" viewBox="0 0 20 20"><path d="M5 9.500l3.500 5L14.500 4.500" fill="none" stroke="#000" stroke-width="2.700"/></symbol>
<symbol id="float" viewBox="0 0 16 16"><rect x="1" y="1" width="14" height="14" rx="2.500" fill="#f4f4f4" stroke="#666" stroke-width="1.400"/><path d="M6.500 3.500h6v6h-6z M3.500 6.500h6v6h-6z" fill="#f4f4f4" stroke="#777" stroke-width="1.200"/></symbol>
<symbol id="x" viewBox="0 0 16 16"><rect x="1" y="1" width="14" height="14" rx="2.500" fill="#f4f4f4" stroke="#666" stroke-width="1.400"/><path d="M4 4l8 8M12 4l-8 8" stroke="#555" stroke-width="3"/></symbol>
<symbol id="loop" viewBox="0 0 24 24"><path d="M3 12V8c2-8 18-9 18 3 0 9-7 9-10 9v3l-6-5 6-5v3c4 0 5-1 5-4 0-5-7-4-8 1z" fill="#6dbb6a" stroke="#3f8a42"/></symbol>
</svg>

<main class="page">
<section class="window">
  <header class="titlebar">
    <svg class="i23"><use href="#logo"/></svg><span class="caption">*clase4-finalex-2 - QGIS</span>
    <svg class="controls" viewBox="0 0 150 20"><path d="M1 10.500h16M66 6.500h10v10h-10zM69 6v-3h10v10h-3M132 2.500l15 15M147 2.500l-15 15" fill="none" stroke="#888" stroke-width="1.500"/></svg>
  </header>
  <nav class="menubar"><span>Pro<u>y</u>ecto</span><span><u>E</u>dición</span><span><u>V</u>er</span><span><u>C</u>apa</span><span>Con<u>f</u>iguración</span><span>Co<u>m</u>plementos</span><span>Vect<u>o</u>rial</span><span><u>R</u>áster</span><span>Base de <u>d</u>atos</span><span><u>W</u>eb</span><span>MMQGIS</span><span>Pro<u>c</u>esos</span><span>Ay<u>u</u>da</span></nav>
  <div class="toolbar">
    <i class="grip first"></i><svg><use href="#new"/></svg><svg><use href="#open"/></svg><svg><use href="#save"/></svg><svg><use href="#saveas"/></svg><svg><use href="#layout"/></svg><svg><use href="#layoutm"/></svg><svg><use href="#style"/></svg>
    <i class="grip"></i><svg class="pressed"><use href="#hand"/></svg><svg><use href="#pan"/></svg><svg><use href="#zin"/></svg><svg><use href="#zout"/></svg><svg class="dis"><use href="#z11"/></svg><svg><use href="#zfull"/></svg><svg><use href="#zsel"/></svg><svg><use href="#zlay"/></svg><svg class="dis"><use href="#zlast"/></svg><svg class="dis"><use href="#znext"/></svg><svg><use href="#bm1"/></svg><svg><use href="#bm2"/></svg><svg><use href="#bm3"/></svg><svg><use href="#refresh"/></svg>
    <i class="grip"></i><svg><use href="#ident"/></svg><svg class="dis"><use href="#action"/></svg><b class="arr dis2"></b><svg><use href="#select"/></svg><b class="arr"></b><svg><use href="#selval"/></svg><b class="arr"></b><svg><use href="#desel"/></svg><svg><use href="#table"/></svg><svg><use href="#abacus"/></svg><svg><use href="#gear"/></svg><svg><use href="#sigma"/></svg><svg><use href="#measure"/></svg><b class="arr"></b><svg><use href="#tip"/></svg><svg><use href="#text"/></svg><b class="arr"></b>
    <i class="grip"></i><svg><use href="#osm"/></svg><svg><use href="#crayon"/></svg>
    <i class="grip"></i><svg><use href="#grid"/></svg><svg><use href="#yy"/></svg><svg><use href="#leaf"/></svg><svg><use href="#mm"/></svg><svg><use href="#dot"/></svg><svg><use href="#info"/></svg>
    <i class="grip"></i><svg><use href="#ic"/></svg>
  </div>
  <div class="toolbar second">
    <i class="grip first"></i><svg><use href="#dsm"/></svg><svg><use href="#gpkg"/></svg><svg><use href="#newv"/></svg><svg><use href="#newq"/></svg><svg><use href="#chip"/></svg>
    <i class="grip"></i><svg class="dis"><use href="#pencils"/></svg><svg class="dis"><use href="#pencil"/></svg><svg class="dis gray"><use href="#save"/></svg><svg class="dis"><use href="#pts"/></svg><svg class="dis"><use href="#vertex"/></svg><b class="arr dis2"></b><svg class="dis"><use href="#modify"/></svg><svg class="dis"><use href="#trash"/></svg><svg class="dis"><use href="#cut"/></svg><svg class="dis"><use href="#copy"/></svg><svg class="dis"><use href="#paste"/></svg><svg class="dis"><use href="#undo"/></svg><svg class="dis"><use href="#redo"/></svg>
    <i class="grip"></i><svg><use href="#label"/></svg><svg><use href="#diag"/></svg><svg><use href="#labsel"/></svg><svg class="dis"><use href="#labx"/></svg><svg class="dis"><use href="#labx"/></svg><svg class="dis"><use href="#labx"/></svg><svg class="dis"><use href="#labx"/></svg><svg class="dis"><use href="#labx"/></svg>
    <i class="grip"></i><svg><use href="#tri"/></svg><svg><use href="#bino"/></svg>
    <i class="grip"></i><svg><use href="#py"/></svg><svg><use href="#person"/></svg>
    <i class="grip"></i><svg><use href="#help"/></svg>
    <i class="grip"></i><svg><use href="#nn"/></svg>
    <i class="grip"></i><svg class="dis"><use href="#ruler"/></svg><svg class="dis"><use href="#pts"/></svg><b class="arr dis2"></b><svg class="dis"><use href="#blob"/></svg><svg class="dis"><use href="#blob2"/></svg><svg class="dis"><use href="#blob"/></svg><svg class="dis"><use href="#blob"/></svg><svg class="dis"><use href="#blob"/></svg><svg class="dis"><use href="#blob"/></svg><svg class="dis"><use href="#blob"/></svg><svg class="dis"><use href="#blob3"/></svg><svg class="dis"><use href="#blob4"/></svg><svg class="dis gray"><use href="#vdis"/></svg><svg class="dis"><use href="#split"/></svg><svg class="dis"><use href="#split"/></svg><svg class="dis"><use href="#split"/></svg><svg class="dis"><use href="#lines"/></svg><svg class="dis"><use href="#rot"/></svg><b class="arr dis2"></b>
  </div>

  <div class="workspace">
    <aside class="side">
      <i class="hgrip"></i>
      <div><svg><use href="#addv"/></svg></div><div><svg><use href="#raster"/></svg></div><div><svg><use href="#comma"/></svg></div><div><svg><use href="#addq"/></svg></div><div><svg><use href="#virt"/></svg></div><div><svg><use href="#addel"/></svg><b class="arr"></b></div><div><svg><use href="#addgl"/></svg><b class="arr"></b></div><div><svg><use href="#addwcs"/></svg></div><div><svg><use href="#addwfs"/></svg><b class="arr"></b></div><div><svg><use href="#newv"/></svg><b class="arr"></b></div>
    </aside>
    <section class="docks">
      <h2 class="dock-title">Navegador<span><svg><use href="#float"/></svg><svg><use href="#x"/></svg></span></h2>
      <div class="dock-tools"><svg><use href="#addbox"/></svg><svg><use href="#refresh"/></svg><svg><use href="#funnel"/></svg><svg><use href="#collapse"/></svg><svg><use href="#iblue"/></svg></div>
      <ul class="tree browser">
        <li><i></i><svg><use href="#star"/></svg>Favoritos</li>
        <li><i class="exp"></i><svg><use href="#fproj"/></svg>Inicio del proyecto</li>
        <li><i class="exp"></i><svg><use href="#fhome"/></svg>Inicio</li>
        <li><i class="exp"></i><svg><use href="#folder"/></svg>C:\</li>
        <li><i class="exp"></i><svg><use href="#folder"/></svg>G:\</li>
        <li><i></i><svg><use href="#box"/></svg>GeoPackage</li>
        <li><i></i><svg><use href="#quill"/></svg>SpatiaLite</li>
        <li><i></i><svg><use href="#eleph"/></svg>PostGIS</li>
        <li><i></i><svg><use href="#mssql"/></svg>MSSQL</li>
        <li><i></i><svg><use href="#oracle"/></svg>Oracle</li>
        <li><i></i><svg><use href="#db2"/></svg>DB2</li>
        <li><i></i><svg><use href="#globe"/></svg>WMS/WMTS</li>
        <li><i class="exp"></i><svg><use href="#globe"/></svg>XYZ Tiles</li>
        <li><i></i><svg><use href="#wcs"/></svg>WCS</li>
        <li><i></i><svg><use href="#wfs"/></svg>WFS</li>
        <li><i></i><svg><use href="#ows"/></svg>OWS</li>
        <li><i></i><svg><use href="#arcm"/></svg>ArcGisMapServer</li>
        <li><i></i><svg><use href="#arcf"/></svg>ArcGisFeatureServer</li>
        <li><i></i><svg><use href="#geonode"/></svg>GeoNode</li>
      </ul>
      <div class="splitter"><i></i></div>
      <h2 class="dock-title second-title">Capas<span><svg><use href="#float"/></svg><svg><use href="#x"/></svg></span></h2>
      <div class="dock-tools lower"><svg><use href="#brush"/></svg><svg><use href="#addgrp"/></svg><svg><use href="#eye"/></svg><svg><use href="#funnel"/></svg><svg><use href="#eps"/></svg><b class="arr"></b><svg><use href="#expand"/></svg><svg><use href="#collapse"/></svg><svg><use href="#rem"/></svg></div>
      <div class="layers">
        <ul class="tree">
          <li class="l1 off"><i></i><em class="cb"></em><svg><use href="#points"/></svg><span>huelgafem_total</span></li>
          <li class="l1"><i class="open"></i><em class="cb"><svg><use href="#check"/></svg></em><svg><use href="#group"/></svg><span>time</span></li>
          <li class="l2"><i class="open"></i><em class="cb"><svg><use href="#check"/></svg></em><svg><use href="#group"/></svg><span>8</span></li>
          <li class="l3 sel"><i></i><em class="cb"><svg><use href="#check"/></svg></em><svg><use href="#points"/></svg><span>huelgafem_8</span><svg class="f"><use href="#filt"/></svg></li>
          <li class="l3 off"><i></i><em class="cb"></em><svg></svg><span>Triangulación_8</span></li>
          <li class="l3 off"><i></i><em class="cb"></em><svg></svg><span>huelgafem_8 copiar</span><svg class="f"><use href="#filt"/></svg></li>
          <li class="l2"><i class="open"></i><em class="cb"></em><svg><use href="#group"/></svg><span>9</span></li>
          <li class="l3 off"><i></i><em class="cb"></em><svg><use href="#points"/></svg><span>huelgafem_9</span><svg class="f"><use href="#filt"/></svg></li>
          <li class="l3 off"><i></i><em class="cb"></em><svg></svg><span>Triangulación de Delaunay</span></li>
          <li class="l3 off"><i></i><em class="cb"></em><svg></svg><span>huelgafem_9 copiar</span><svg class="f"><use href="#filt"/></svg></li>
          <li class="l2"><i class="open"></i><em class="cb"></em><svg><use href="#group"/></svg><span>10</span></li>
          <li class="l3 off"><i></i><em class="cb"></em><svg><use href="#points"/></svg><span>huelgafem_10</span><svg class="f"><use href="#filt"/></svg></li>
          <li class="l3 off"><i></i><em class="cb"></em><svg></svg><span>Triangulación de Delaunay</span></li>
          <li class="l3 off"><i></i><em class="cb"></em><svg></svg><span>huelgafem_10 copiar</span><svg class="f"><use href="#filt"/></svg></li>
          <li class="l2"><i class="open"></i><em class="cb"></em><svg><use href="#group"/></svg><span>11</span></li>
          <li class="l3 off"><i></i><em class="cb"></em><svg><use href="#points"/></svg><span>huelgafem_11</span><svg class="f"><use href="#filt"/></svg></li>
          <li class="l3 off"><i></i><em class="cb"></em><svg></svg><span>Triangulación de Delaunay</span></li>
          <li class="l3 off"><i></i><em class="cb"></em><svg></svg><span>huelgafem_11 copiar</span><svg class="f"><use href="#filt"/></svg></li>
          <li class="l2"><i class="open"></i><em class="cb"></em><svg><use href="#group"/></svg><span>12</span></li>
          <li class="l3 off"><i></i><em class="cb"></em><svg><use href="#points"/></svg><span>huelgafem_12</span><svg class="f"><use href="#filt"/></svg></li>
          <li class="l3 off"><i></i><em class="cb"></em><svg></svg><span>Triangulación de Delaunay</span></li>
          <li class="l3 off"><i></i><em class="cb"></em><svg></svg><span>huelgafem_12 copiar</span><svg class="f"><use href="#filt"/></svg></li>
          <li class="l2"><i class="open"></i><em class="cb"></em><svg><use href="#group"/></svg><span>13</span></li>
        </ul>
        <div class="scroll"><span><b class="up"></b></span><div class="thumb"></div><div class="track"></div><span><b class="down"></b></span></div>
      </div>
    </section>
    <section class="map">
      <svg class="canvas" viewBox="1002 639 2151 1319" preserveAspectRatio="none">
        <g fill="url(#glow)">
          <circle cx="1653" cy="804" r="52" opacity=".1"/><circle cx="1940" cy="838" r="54" opacity=".11"/><circle cx="2045" cy="832" r="56" opacity=".22"/><circle cx="2082" cy="880" r="48" opacity=".09"/>
          <circle cx="2505" cy="1097" r="60" opacity=".64"/><circle cx="2458" cy="1160" r="52" opacity=".11"/><circle cx="2452" cy="1470" r="50" opacity=".12"/><circle cx="1207" cy="1487" r="52" opacity=".1"/>
          <circle cx="1767" cy="1816" r="50" opacity=".26"/><circle cx="1572" cy="1820" r="46" opacity=".1"/><circle cx="1998" cy="1816" r="44" opacity=".08"/>
        </g>
        <g class="coast" transform="translate(1200 720) scale(.6378 .3333)">
          <path d="M92 450L98 430 92 390 110 370 105 335 150 320 158 285 172 265 182 290 235 285 245 262 270 275 262 185 290 165 310 135 340 100 345 148 352 118 372 98 388 150 400 122 428 155 445 205 500 203 575 220 612 210 650 215 682 180 708 235 750 232 785 265 850 285 880 305 950 308 1010 272 1025 295 1062 262 1080 300 1125 320 1145 332 1165 295 1198 290 1240 330 1255 352 1305 355 1357 315 1372 348 1420 362 1427 420 1418 462 1450 445 1500 490 1540 500 1538 522"/>
          <path d="M372 100L365 190 335 265 320 360 322 430 315 520M280 290L275 230 290 210M265 200L262 255M480 212L455 270 472 345 490 390 510 400 485 435 505 495 570 495 575 450 610 460 645 435 682 490 700 450 730 468 770 440 800 430 805 400 835 380 850 405 900 350 900 310M845 405L858 465 910 460 948 520M858 465L848 520M248 520L255 500 312 505M100 435L118 500 125 520 155 498M992 520L995 490 1045 410 1095 415 1080 395 1100 355 1125 330M1145 332L1108 370 1110 420 1150 395 1165 455 1215 475 1235 450 1250 355M1130 430L1135 490 1155 520M1155 460L1145 480 1160 510M1225 460L1225 500 1275 520 1315 505 1340 420 1340 390 1360 350"/>
        </g>
        <g class="coast" transform="translate(2400 880) scale(.3333 .3827)">
          <path d="M155 165L190 168 235 175 238 160M180 190L195 225 250 228 265 240 258 265 240 278 262 300 335 290 380 300 420 320 400 380 365 392 375 415 420 425 445 445 490 432 520 438 515 470 570 440 620 390 655 370 658 320 645 290 615 275 615 232 665 232 680 200 640 195 625 185 625 155 600 165 575 148 530 152 490 175 465 180 455 205 410 210 380 188 330 178 290 185 240 205 235 185M158 245L190 232M155 280V350M520 470L435 508 350 550 320 610 270 630 155 660"/>
          <path d="M415 1272L460 1245 520 1208 560 1165 640 1132 715 1110 712 1155 690 1165 670 1125M690 1165L735 1195 770 1173 812 1195 785 1255 765 1275 745 1335 685 1380 655 1343 585 1345 570 1290 540 1272 490 1312 445 1290 420 1272M910 1075L935 1055 1005 1050 1010 1040 1075 1070 1095 1145 1065 1140 985 1105 930 1110 910 1075M155 1462L205 1490 155 1535"/>
        </g>
        <g class="coast" transform="translate(1190 1660) scale(.8418 .3333)">
          <path d="M410 450L425 470 430 520 440 590 458 655 478 660 490 695 520 735 542 705 548 660 555 670 570 590 600 540 620 520 650 530 665 490 685 445M555 450L540 490 520 500 535 515 545 505 560 570 570 600M550 780L565 785 558 795M915 445H935"/>
        </g>
      </svg>

      <section class="dialog">
        <header><svg class="i23"><use href="#logo"/></svg><span>Triangulación de Delaunay</span><svg class="close" viewBox="0 0 16 16"><path d="M1 1l14 14M15 1L1 15" stroke="#000" stroke-width="1.700"/></svg></header>
        <div class="d-main">
          <div class="d-left">
            <div class="tabs"><span class="tab on">Parámetros</span><span class="tab">Registro</span></div>
            <div class="panel">
              <label class="l-in">Capa de entrada</label>
              <div class="row r1"><span class="combo"><svg><use href="#points"/></svg>huelgafem_8 [EPSG:4326]<b class="arr"></b></span><span class="btn dots a">...</span><span class="btn dots b"><svg><use href="#loop"/></svg></span></div>
              <div class="chk c1"><em class="cb"></em>Objetos seleccionados solamente</div>
              <label class="l-out">Triangulación de Delaunay</label>
              <div class="row r2"><span class="input">[Crear capa temporal]</span><span class="btn dots c">...</span></div>
              <div class="chk c2"><em class="cb"><svg><use href="#check"/></svg></em>Abrir el archivo de salida después de ejecutar el algoritmo</div>
            </div>
          </div>
          <div class="gutter"><b></b></div>
          <article class="help"><h1>Triangulación de Delaunay</h1><p>This algorithm creates a polygon layer with the<br>delaunay triangulation corresponding to a points<br>layer.</p></article>
        </div>
        <div class="d-row p"><span class="progress">0%</span><span class="btn w off-btn">Cancelar</span></div>
        <div class="d-row"><span class="btn lotes">Ejecutar como proceso por lotes...</span><span class="btn w primary">Ejecutar</span><span class="btn w">Cerrar</span><span class="btn w">Ayuda</span></div>
      </section>
    </section>
  </div>

  <footer class="status">
    <span class="search"><svg viewBox="0 0 20 20"><circle cx="8.500" cy="8" r="6" fill="none" stroke="#888" stroke-width="1.500"/><path d="M13 12.500l5 5.500" stroke="#888" stroke-width="1.800"/></svg>Escriba para localizar (Ctrl+K)</span>
    <span class="s1">Coordenada</span><span class="field f1">294459,4035522</span>
    <svg class="sat" viewBox="0 0 24 24"><path d="M4 3l15 18M2 8l9-6M13 22l9-8M5 12l8-7M10 18l8-7" stroke="#333" stroke-width="2.600"/><circle cx="12" cy="12" r="4" fill="#fff" stroke="#333" stroke-width="1.500"/><path d="M14 5l7-3" stroke="#555" stroke-width="1.500"/></svg>
    <span class="s2">Escala</span><span class="field f2">1:4166870<i><b class="arr"></b></i></span>
    <svg class="lock" viewBox="0 0 18 24"><path d="M4.500 11V7c0-6 9-6 9 0v4" fill="none" stroke="#999" stroke-width="2.500"/><rect x="1" y="11" width="16" height="12" rx="1.500" fill="#666"/></svg>
    <span class="s3">Amplificador</span><span class="field f3">100%<i class="spin"><b class="up"></b><b class="down"></b></i></span>
    <span class="s4">Rotación</span><span class="field f4">0,0 °<i class="spin"><b class="up"></b><b class="down"></b></i></span>
    <em class="cb"><svg><use href="#check"/></svg></em><span class="s5">Representar</span>
    <svg class="crs" viewBox="0 0 24 24"><circle cx="12" cy="11" r="8" fill="#888"/><path d="M1 11h22M12 2v18M5 6h14M5 16h14M12 2c-6 5-6 13 0 18M12 2c6 5 6 13 0 18" fill="none" stroke="#ddd"/><path d="M1 11h4M19 11h4M12 1v4M12 18v5" stroke="#666" stroke-width="2"/></svg>
    <span class="s6">EPSG:3042</span>
    <svg class="msg" viewBox="0 0 26 24"><ellipse cx="13" cy="10.500" rx="12" ry="9.500" fill="#666"/><path d="M14 18l7 6 1-9z" fill="#666"/><path d="M6 10.500h3M11.500 10.500h3M17 10.500h3" stroke="#fff" stroke-width="3"/></svg>
  </footer>
</section>
<div class="note">Input: points layer</div>
<svg class="pointer" viewBox="0 0 40 564"><path d="M20 0V560M4 542l16 17 16-17" fill="none" stroke="#ff5249" stroke-width="4.200"/></svg>
<div class="frame big"></div>
<div class="frame small"></div>
</main>
</body>
</html>
```
FILE: styles.css
```css
* { box-sizing: border-box; }
body { margin: 0; font-family: "Noto Sans", "Open Sans", sans-serif; font-size: 16.4px; color: #000; background: #fff; }
.defs { position: absolute; }
i, em { font-style: normal; }
h1, h2, p, ul { margin: 0; padding: 0; }
.page { position: relative; width: 3509px; height: 2482px; border: 5px solid #ff5249; padding: 475px 0 0 349px; overflow: hidden; }
.window { width: 2800px; height: 1519px; display: flex; flex-direction: column; background: #efefef; }
.window svg { flex: none; width: 23px; height: 23px; }
.t-a { font: bold 12px "Noto Sans", sans-serif; fill: #555; }
.t-ic { font: 20px "Liberation Serif", serif; fill: #a0121e; }
.t-nn { font: bold 10.5px "Noto Sans", sans-serif; fill: #f00; }
.t-db { font: 9px "Noto Sans", sans-serif; fill: #fff; }

.titlebar { height: 38px; background: #fff; display: flex; align-items: center; padding-left: 3px; color: #999; }
.caption { margin-left: 8px; }
.window .controls { width: 150px; height: 20px; margin-left: auto; margin-right: 22px; }
.menubar { height: 29px; border-bottom: 2px solid #d4d4d4; display: flex; align-items: center; gap: 21.3px; padding-left: 15px; color: #999; white-space: nowrap; }
.menubar u { text-underline-offset: 3px; }
.toolbar { height: 45px; border-bottom: 2px solid #b5b5b5; background: linear-gradient(#fafafa, #eee); display: flex; align-items: center; }
.toolbar.second { height: 47px; border-bottom-width: 3px; }
.toolbar svg { width: 36.4px; height: 23px; }
.toolbar svg.pressed { height: 34px; width: 34.4px; margin: 0 1px; padding: 5px; border: 1.500px solid #aaa; border-radius: 3px; background: #dcdcdc; }
.dis { opacity: .45; }
.gray { filter: grayscale(1); }
.grip { flex: none; width: 23.8px; height: 23px; background: radial-gradient(circle, #bbb 1px, transparent 1.300px) 13px 0 / 5px 5px; background-clip: content-box; padding: 0 4px 0 13px; background-origin: border-box; }
.grip.first { width: 18px; padding: 0 4px 0 7px; background-position: 7px 0; }
.arr { flex: none; width: 18px; height: 8px; display: block; }
.arr::before { content: ""; display: block; margin: 1px auto 0 3px; width: 0; border: 5px solid transparent; border-top: 6px solid #555; border-bottom: 0; }
.arr.dis2 { opacity: .55; }
.second .arr, .toolbar .arr { margin-left: -2px; margin-right: 2px; }

.workspace { flex: none; height: 1319px; display: flex; }
.side { width: 64px; background: linear-gradient(90deg, #fbfbfb, #ececec); padding-top: 5px; }
.side div { height: 35px; display: flex; align-items: center; padding-left: 12px; }
.side div .arr { margin-left: 7px; }
.hgrip { display: block; width: 24px; height: 6px; margin: 0 0 5px 22px; background: radial-gradient(circle, #bbb 1px, transparent 1.300px) 0 0 / 5px 4px; }
.side .hgrip + div { margin-top: -1px; }

.docks { width: 582px; border-left: 2px solid #b5b5b5; display: flex; flex-direction: column; padding-right: 9px; }
.dock-title { height: 25px; font-size: 16.4px; font-weight: 400; display: flex; justify-content: space-between; align-items: center; padding: 0 3px 0 4.500px; }
.dock-title span { display: flex; gap: 4px; }
.window .dock-title svg { width: 16px; height: 16px; }
.second-title { height: 28px; }
.dock-tools { height: 47px; display: flex; align-items: center; gap: 13.4px; padding-left: 9.500px; }
.window .dock-tools svg { width: 23px; height: 22px; }
.dock-tools.lower { height: 44px; }
.dock-tools .arr { margin: 0 -6px 0 -8px; }
.tree { list-style: none; white-space: nowrap; }
.tree li { height: 26.26px; display: flex; align-items: center; }
.tree i { flex: none; width: 28px; height: 12px; display: flex; justify-content: center; align-items: center; }
.exp::before { content: ""; border: 5.500px solid transparent; border-left: 6px solid #555; border-right: 0; }
.open::before { content: ""; border: 5px solid transparent; border-top: 5.500px solid #555; border-bottom: 0; }
.browser { height: 572px; background: #fff; border: 2px solid #b5b5b5; border-left: 0; }
.browser svg { margin: 0 9px 0 5px; }
.splitter { height: 10px; display: flex; justify-content: center; align-items: center; }
.splitter i { width: 26px; height: 4px; background: radial-gradient(circle, #bbb 1px, transparent 1.300px) 0 0 / 5px 4px; }
.layers { flex: 1; min-height: 0; display: flex; background: #fff; border: 2px solid #b5b5b5; border-left: 0; overflow: hidden; }
.layers .tree { flex: 1; }
.layers .l2 { padding-left: 29px; }
.layers .l3 { padding-left: 58px; }
.layers li { position: relative; }
.cb { flex: none; width: 20px; height: 20px; border: 2px solid #bbb; background: #fff; display: block; }
.window .cb svg { width: 20px; height: 20px; margin: -2px; display: block; }
.layers .cb { margin: 0 11px 0 5.500px; }
.window .layers li > svg { width: 20px; height: 20px; margin-right: 9px; color: #888; }
.window .layers li > svg.f { margin-left: auto; margin-right: 4px; color: #555; }
.layers .off span { font-weight: 700; font-style: italic; color: #b9b9b9; letter-spacing: -.2px; }
.layers .sel { background: #efefef; }
.layers .sel span { font-weight: 700; text-decoration: underline; }
.window .layers .sel > svg { color: #5b88b8; }
.scroll { width: 20px; border-left: 1.500px solid #b5b5b5; display: flex; flex-direction: column; }
.scroll span { height: 20px; display: flex; align-items: center; justify-content: center; background: #fafafa; }
.thumb { height: 172px; border-top: 1.500px solid #b5b5b5; border-bottom: 1.500px solid #b5b5b5; background: #fbfbfb; }
.track { flex: 1; background: #e2e2e2; border-bottom: 1.500px solid #b5b5b5; }
.up { border: 5px solid transparent; border-bottom: 6px solid #555; border-top: 0; }
.down { border: 5px solid transparent; border-top: 6px solid #555; border-bottom: 0; }

.map { flex: 1; position: relative; border-left: 2px solid #b5b5b5; background: #1e0238; }
.window .canvas { display: block; width: 100%; height: 100%; }
.coast path { fill: none; stroke: #a58fb5; stroke-opacity: .65; stroke-width: 1.300; stroke-dasharray: 2.500 3.500; vector-effect: non-scaling-stroke; }

.dialog { position: absolute; left: 215.500px; top: 256px; width: 1234px; height: 913px; border: 2px solid #1a6fb5; border-bottom-width: 1.500px; background: #efefef; box-shadow: 0 6px 22px rgba(0,0,0,.55); display: flex; flex-direction: column; font-size: 15.4px; letter-spacing: -.43px; white-space: nowrap; }
.dialog header { flex: none; height: 43px; background: #fff; display: flex; align-items: center; padding: 0 15px 0 11px; font-size: 16.2px; letter-spacing: 0; }
.dialog header span { margin-left: 8px; margin-top: 2px; }
.dialog .close { width: 16px; height: 16px; margin-left: auto; }
.d-main { height: 744px; display: flex; padding: 17px 15px 0 16px; }
.d-left { width: 802px; display: flex; flex-direction: column; }
.tabs { height: 33px; display: flex; align-items: flex-end; }
.tab { width: 91px; height: 32px; display: flex; align-items: center; justify-content: center; border: 1.500px solid #b5b5b5; border-bottom: 0; border-radius: 3px 3px 0 0; background: #e8e8e8; padding-top: 3px; }
.tab.on { width: 116px; height: 36px; background: #fff; margin-bottom: -2px; border-left-color: #aaa; z-index: 1; }
.panel { flex: 1; border: 2px solid #a8a8a8; border-bottom-width: 3px; padding: 0 7px; }
.panel label { display: block; line-height: 24px; }
.l-in { padding-top: 5px; }
.row { display: flex; align-items: flex-start; }
.r1 { margin-top: 7px; height: 34px; }
.combo, .input, .btn, .progress { border: 1.500px solid #aaa; border-bottom-width: 2px; border-radius: 4px; display: flex; align-items: center; }
.combo { width: 698px; height: 34px; background: linear-gradient(#fdfdfd, #ececec); padding-left: 8px; }
.window .combo svg { width: 21px; height: 21px; margin-right: 5px; color: #888; }
.combo .arr { margin-left: auto; margin-right: 4px; }
.btn { justify-content: center; background: linear-gradient(#fff, #ebebeb); }
.dots.a { width: 33px; height: 29px; margin-left: 9px; }
.dots.b { width: 35px; height: 33px; margin-left: 10px; }
.dots.c { width: 34px; height: 32px; margin-left: 9px; }
.chk { display: flex; align-items: center; height: 24px; gap: 6px; }
.c1 { margin-top: 10px; color: #888; }
.c1 .cb { background: #eee; }
.l-out { margin-top: 9px; }
.r2 { margin-top: 6px; }
.input { width: 742px; height: 32px; background: #fff; border-top-width: 2px; color: #808080; padding-left: 4px; }
.c2 { margin-top: 11px; }
.gutter { width: 24px; padding: 3px 0 0 6px; }
.gutter b { display: block; width: 0; border: 6px solid transparent; border-right: 6px solid #555; border-left: 0; }
.help { flex: 1; background: #fff; border: 2px solid #b5b5b5; color: #666; padding: 7px 0 0 4px; }
.help h1 { font-size: 24px; line-height: 32px; font-weight: 700; color: #555; letter-spacing: -.5px; padding-left: 2px; }
.help p { margin-top: 15px; line-height: 19.300px; }
.d-row { display: flex; height: 30px; gap: 8.500px; padding: 0 16px 0 15px; }
.d-row.p { margin-top: 37px; margin-bottom: 9px; }
.progress { flex: 1; background: #fff; justify-content: center; }
.btn.w { width: 116px; }
.lotes { width: 254px; margin-right: auto; }
.off-btn { color: #888; border-color: #c5c5c5; }
.primary { border-color: #3daee9; background: linear-gradient(#fff, #eaf3fb); }

.status { flex: none; height: 41px; border-top: 2px solid #b5b5b5; display: flex; align-items: center; padding: 4px 0 0 6px; letter-spacing: -.43px; font-size: 15.4px; white-space: nowrap; align-items: center; padding-bottom: 3px; }
.search { width: 372px; height: 32px; border: 1.500px solid #aaa; border-radius: 3px; background: #fff; display: flex; align-items: center; color: #777; font-size: 15px; letter-spacing: -.2px; padding-left: 11px; margin-right: 1184.500px; }
.window .search svg { width: 19px; height: 18px; margin-right: 11px; }
.field { flex: none; height: 32px; border: 1.500px solid #aaa; border-top-width: 2px; border-radius: 3px; background: #fff; display: flex; align-items: center; padding-left: 7px; }
.field i { margin-left: auto; align-self: stretch; border-left: 1.500px solid #ccc; display: flex; align-items: center; background: #f6f6f6; }
.spin { width: 19px; flex-direction: column; justify-content: center; gap: 5px; }
.s1 { width: 91px; }
.f1 { width: 139.500px; margin-right: 6px; }
.window .sat { width: 22px; }
.s2 { width: 48px; margin-left: 20px; }
.f2 { width: 118px; }
.field i:not(.spin) { width: 28px; justify-content: center; padding-left: 6px; }
.window .lock { width: 18px; height: 22px; margin-left: 18px; }
.s3 { width: 90.500px; margin-left: 12px; }
.f3 { width: 128px; }
.s4 { width: 76px; margin-left: 13px; }
.f4 { width: 121px; margin-right: 10px; }
.s5 { width: 113px; margin-left: 6px; }
.s6 { width: 105px; margin-left: 5px; }
.window .msg { width: 26px; }

.note { position: absolute; left: 1564px; top: 328px; font-size: 49px; line-height: 66px; letter-spacing: -.75px; color: #ff5249; white-space: nowrap; }
.pointer { position: absolute; left: 1545px; top: 421px; width: 40px; height: 564px; }
.frame { position: absolute; border: 4.500px solid #ff5249; }
.big { left: 1172px; top: 855px; width: 1320px; height: 991px; }
.small { left: 2024px; top: 1738.500px; width: 161px; height: 66px; }
```
